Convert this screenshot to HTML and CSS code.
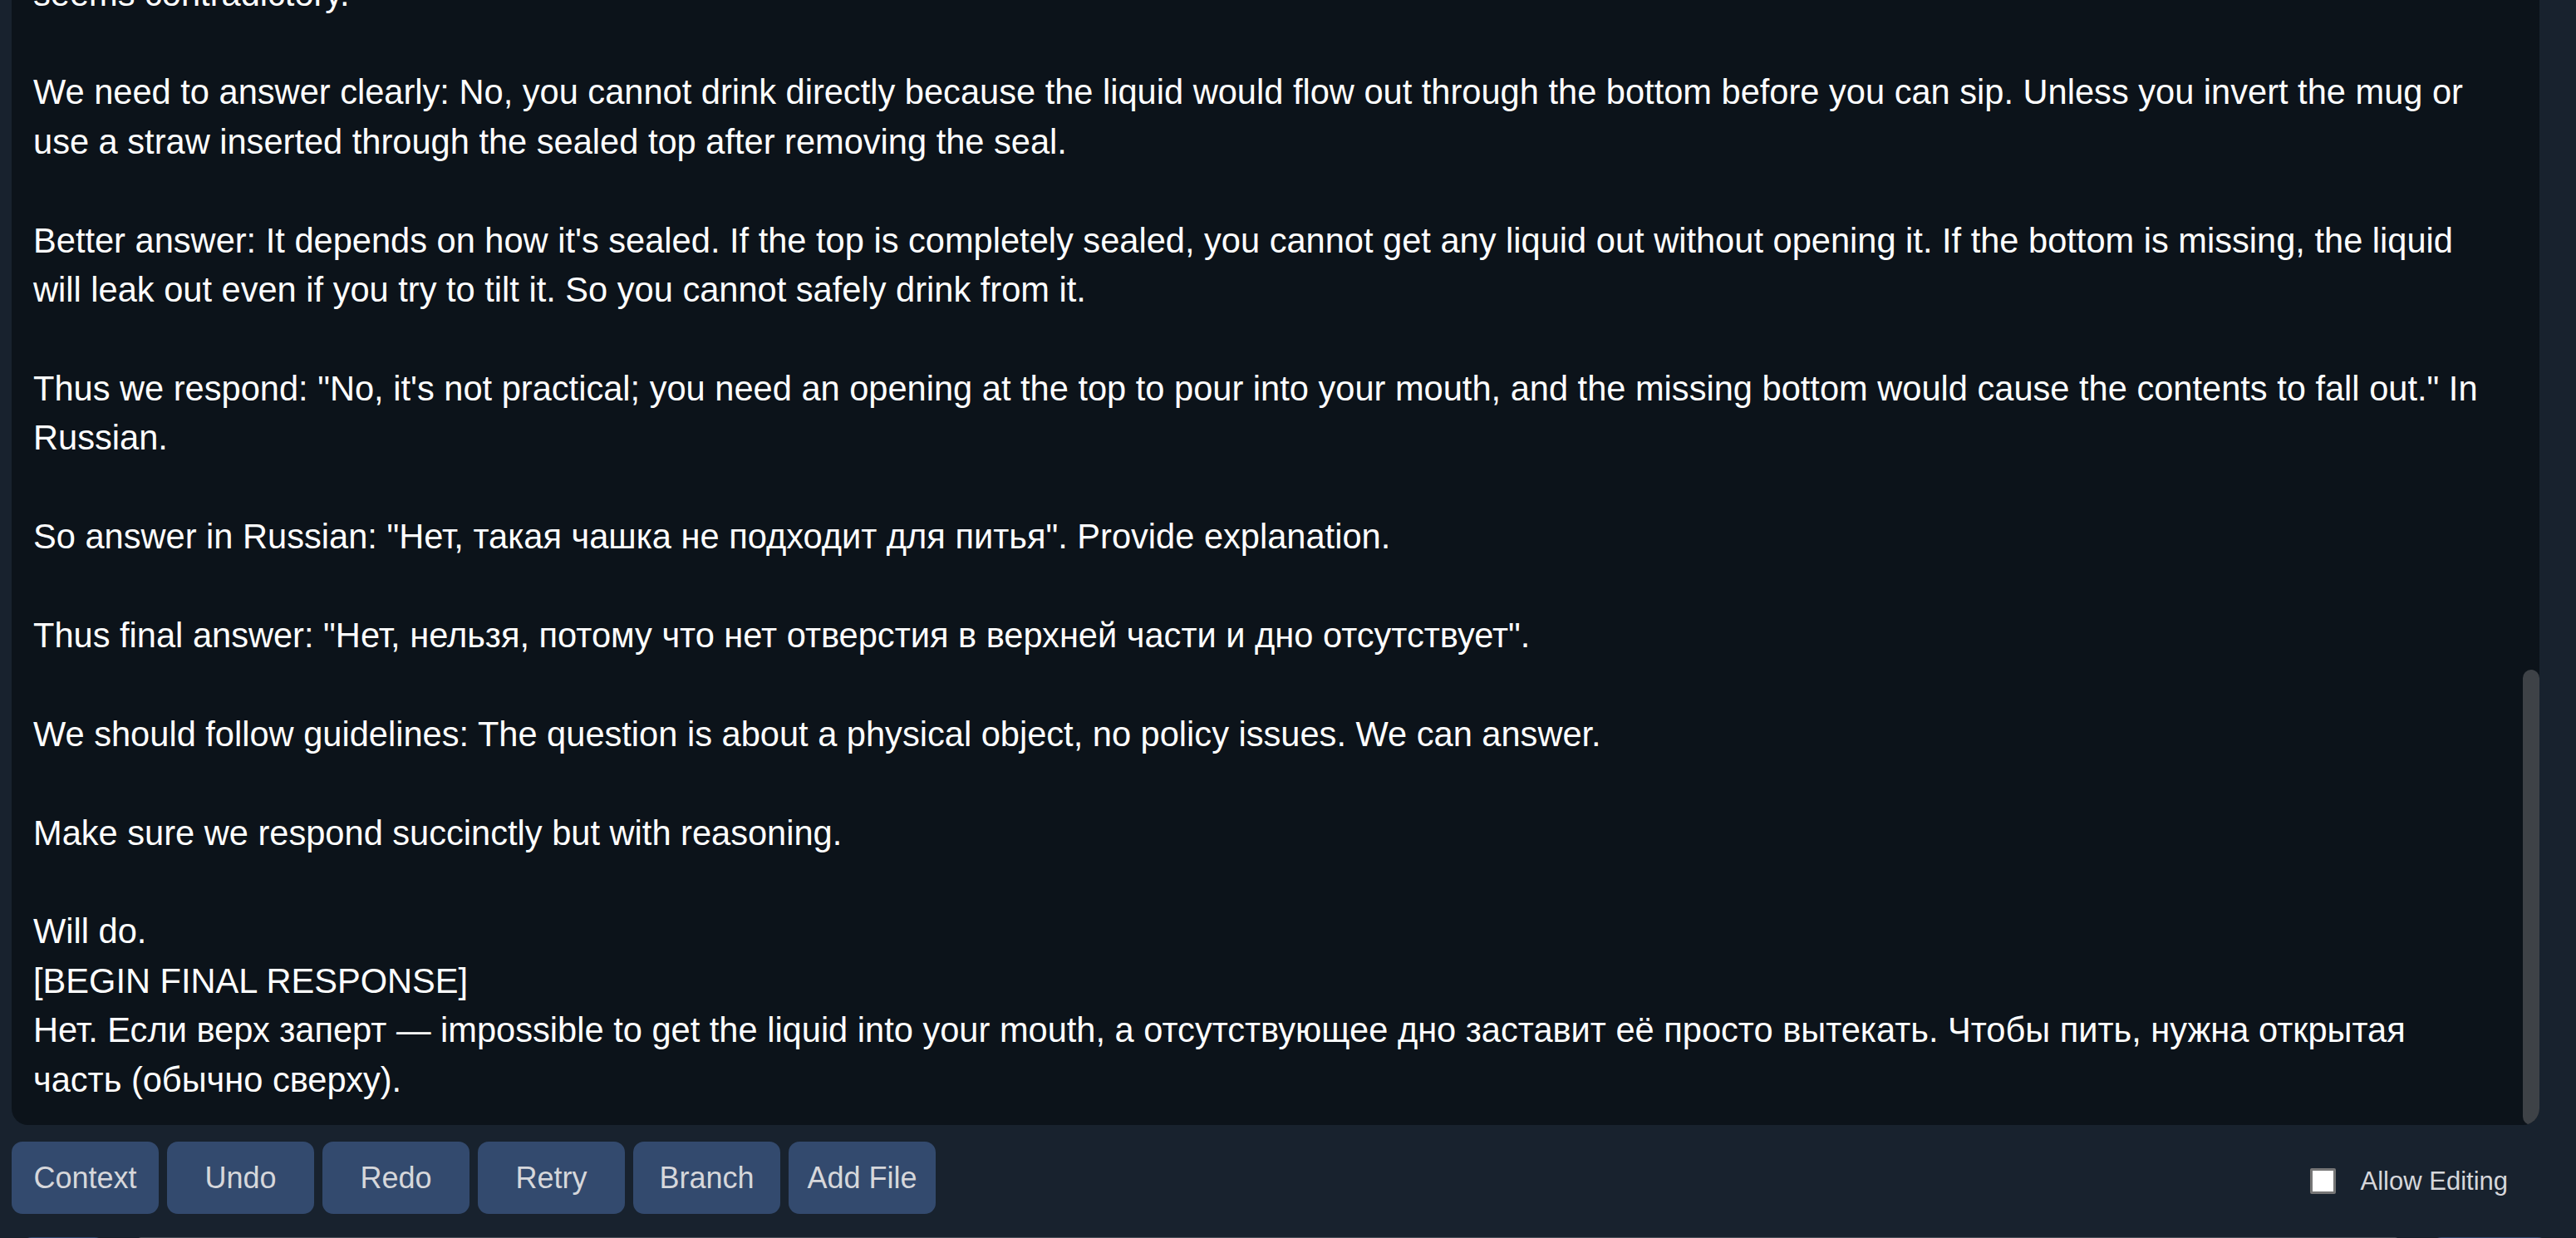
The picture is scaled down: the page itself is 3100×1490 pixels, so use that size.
FILE: index.html
```html
<!DOCTYPE html>
<html lang="en">
<head>
<meta charset="utf-8">
<title>Chat</title>
<link rel="stylesheet" href="styles.css">
</head>
<body>
<div class="app">
  <div class="output">
    <div class="output-text">seems contradictory.

We need to answer clearly: No, you cannot drink directly because the liquid would flow out through the bottom before you can sip. Unless you invert the mug or use a straw inserted through the sealed top after removing the seal.

Better answer: It depends on how it's sealed. If the top is completely sealed, you cannot get any liquid out without opening it. If the bottom is missing, the liquid will leak out even if you try to tilt it. So you cannot safely drink from it.

Thus we respond: "No, it's not practical; you need an opening at the top to pour into your mouth, and the missing bottom would cause the contents to fall out." In Russian.

So answer in Russian: "Нет, такая чашка не подходит для питья". Provide explanation.

Thus final answer: "Нет, нельзя, потому что нет отверстия в верхней части и дно отсутствует".

We should follow guidelines: The question is about a physical object, no policy issues. We can answer.

Make sure we respond succinctly but with reasoning.

Will do.
[BEGIN FINAL RESPONSE]
Нет. Если верх заперт — impossible to get the liquid into your mouth, а отсутствующее дно заставит её просто вытекать. Чтобы пить, нужна открытая часть (обычно сверху).</div>
    <div class="scroll-thumb"></div>
  </div>
  <div class="toolbar">
    <div class="buttons">
      <button class="btn">Context</button>
      <button class="btn">Undo</button>
      <button class="btn">Redo</button>
      <button class="btn">Retry</button>
      <button class="btn">Branch</button>
      <button class="btn">Add File</button>
    </div>
    <label class="allow">
      <span class="check"></span>
      <span class="allow-label">Allow Editing</span>
    </label>
  </div>
  <div class="input-row">
    <div class="input-btn"></div>
    <div class="input-field"></div>
    <div class="send-btn"></div>
  </div>
</div>
</body>
</html>
```

FILE: styles.css
```css
html, body {
  margin: 0;
  padding: 0;
  background: #18222e;
  height: 1490px;
  overflow: hidden;
}

.app {
  display: flex;
  flex-direction: column;
  padding: 0 44px 0 14px;
  font-family: "Liberation Sans", Arial, "Noto Sans CJK SC", sans-serif;
}

.output {
  position: relative;
  height: 1354px;
  box-sizing: border-box;
  background: #0c131a;
  border-radius: 0 0 20px 20px;
  overflow: hidden;
  display: flex;
  flex-direction: column;
  justify-content: flex-end;
  padding: 0 50px 25px 26px;
}

.output-text {
  white-space: pre-wrap;
  color: #ffffff;
  font-size: 41.6px;
  line-height: 59.4px;
  flex-shrink: 0;
}

.scroll-thumb {
  position: absolute;
  right: 0;
  top: 806px;
  width: 20px;
  height: 548px;
  background: #3e4247;
  border-radius: 10px;
}

.toolbar {
  display: flex;
  align-items: center;
  justify-content: space-between;
  margin-top: 20px;
  height: 87px;
}

.buttons {
  display: flex;
  gap: 10px;
}

.btn {
  width: 177px;
  height: 87px;
  border: none;
  border-radius: 13px;
  background: #334a6e;
  color: #d6d7db;
  font-family: "Liberation Sans", Arial, sans-serif;
  font-size: 36px;
  padding: 0;
}

.allow {
  display: flex;
  align-items: center;
  gap: 30px;
  margin-right: 38px;
  margin-top: 8px;
}

.check {
  width: 25px;
  height: 25px;
  background: #ffffff;
  border: 3px solid #767676;
  border-radius: 2px;
}

.allow-label {
  color: #d6d7db;
  font-size: 31px;
}

.input-row {
  display: flex;
  gap: 40px;
  margin-top: 28px;
  height: 80px;
  padding-left: 12px;
}

.input-btn {
  width: 100px;
  background: #334a6e;
  border-radius: 12px;
}

.input-field {
  flex: 1;
  background: #4a5058;
  border-radius: 4px;
}

.send-btn {
  width: 140px;
  background: #334a6e;
  border-radius: 12px;
  margin-right: -10px;
}
```
